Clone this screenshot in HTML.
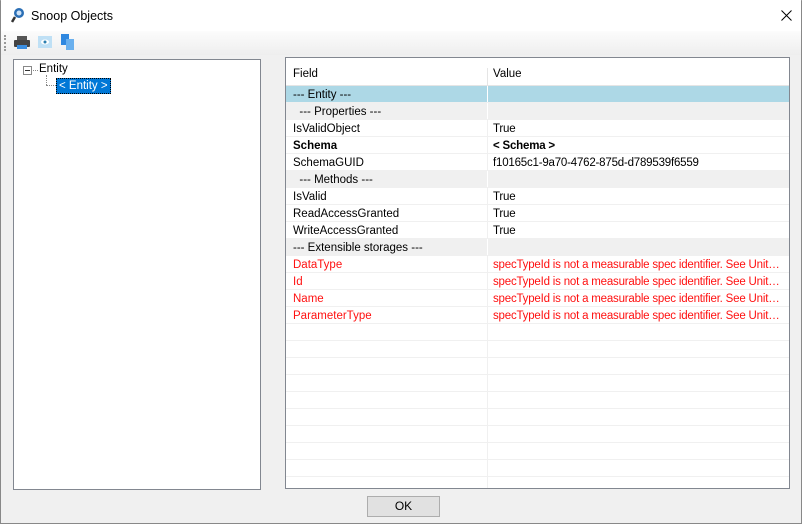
<!DOCTYPE html>
<html><head><meta charset="utf-8">
<style>
*{margin:0;padding:0;box-sizing:border-box}
body{width:802px;height:524px;overflow:hidden;background:#f0f0f0;font-family:"Liberation Sans",sans-serif;font-size:11.5px;color:#000;position:relative}
.win{position:absolute;left:0;top:0;width:802px;height:524px;border:1px solid #888;border-top:1px solid #aaa}
.title{position:absolute;left:1px;top:0;width:800px;height:31px;background:#fff}
.title span{position:absolute;left:30px;top:9px;font-size:12.5px}
.tool{position:absolute;left:1px;top:31px;width:800px;height:24px;background:linear-gradient(#fcfcfc,#eeeeee)}
.tree{position:absolute;left:13px;top:59px;width:248px;height:431px;background:#fff;border:1px solid #828790}
.grid{position:absolute;left:285px;top:57px;width:505px;height:432px;background:#fff;border:1px solid #828790;overflow:hidden}
.hdr{height:28px;position:relative;border-bottom:1px solid #e5e5e5}
.hdr div{position:absolute;top:10px}
.row{height:17px;position:relative;border-bottom:1px solid #f0f0f0;line-height:18px;white-space:nowrap}
.row .f{position:absolute;left:7px;width:194px;overflow:hidden}
.row .v{position:absolute;left:207px;width:290px;overflow:hidden;text-overflow:ellipsis;letter-spacing:-0.2px}
.vl{position:absolute;left:201px;top:0;bottom:0;width:1px;background:#f0f0f0}
.g{background:#f0f0f0}
.sel{background:#add8e6}
.red{color:#ff1010}
.b{font-weight:bold}
.ok{position:absolute;left:367px;top:496px;width:73px;height:21px;background:#e1e1e1;border:1px solid #adadad;text-align:center;line-height:19px;font-size:12px}
</style></head><body>
<div class="win"></div>
<div class="title">
<svg style="position:absolute;left:10px;top:7px" width="14" height="17" viewBox="0 0 14 17"><circle cx="8" cy="6" r="5" fill="#2b6fb5"/><circle cx="8" cy="6" r="2.5" fill="#cfe3f7"/><path d="M4 10 L1 15" stroke="#333" stroke-width="2.5"/></svg>
<span>Snoop Objects</span>
<svg style="position:absolute;left:780px;top:10px" width="11" height="11"><path d="M0.5 0.5L10.5 10.5M10.5 0.5L0.5 10.5" stroke="#000" stroke-width="1"/></svg></div>
<div class="tool">
<div style="position:absolute;left:3px;top:4px;width:2px;height:16px;border-left:2px dotted #999"></div>
<svg style="position:absolute;left:13px;top:5px" width="16" height="14"><rect x="3" y="0" width="10" height="4" fill="#555"/><rect x="0" y="4" width="16" height="7" rx="1" fill="#444"/><rect x="3" y="9" width="10" height="4" fill="#3b8ee0"/></svg>
<svg style="position:absolute;left:37px;top:5px" width="14" height="12"><rect width="14" height="12" fill="#bfe0f5"/><ellipse cx="7" cy="6" rx="4" ry="2.5" fill="#fff"/><circle cx="7" cy="6" r="1.5" fill="#2a7fb0"/></svg>
<svg style="position:absolute;left:60px;top:3px" width="14" height="16"><rect x="0" y="0" width="8" height="11" fill="#2f88e0"/><rect x="5" y="5" width="8" height="11" fill="#6ab0ee"/></svg>
</div>
<div class="tree">
<div style="position:absolute;left:9px;top:6px;width:9px;height:9px;border:1px solid #888;background:#fff"><div style="position:absolute;left:1px;top:3px;width:5px;height:1px;background:#333"></div></div>
<div style="position:absolute;left:19px;top:10px;width:5px;border-top:1px dotted #888"></div>
<div style="position:absolute;left:25px;top:3px">Entity</div>
<div style="position:absolute;left:32px;top:15px;height:10px;border-left:1px dotted #888"></div>
<div style="position:absolute;left:32px;top:25px;width:10px;border-top:1px dotted #888"></div>
<div style="position:absolute;left:42px;top:18px;height:16px;padding:0 2px;background:#0078d7;color:#fff;border:1px dotted #000;line-height:15px">&lt; Entity &gt;</div>
</div>
<div class="grid">
<div class="hdr"><div style="left:7px">Field</div><div style="left:207px">Value</div><div class="vl" style="background:#e5e5e5"></div></div>
<div class="row sel"><div class="f">--- Entity ---</div><div class="vl" style="background:#fff"></div></div>
<div class="row g"><div class="f">&nbsp;&nbsp;--- Properties ---</div><div class="vl" style="background:#fff"></div></div>
<div class="row"><div class="f">IsValidObject</div><div class="vl"></div><div class="v">True</div></div>
<div class="row b"><div class="f">Schema</div><div class="vl"></div><div class="v">&lt; Schema &gt;</div></div>
<div class="row"><div class="f">SchemaGUID</div><div class="vl"></div><div class="v">f10165c1-9a70-4762-875d-d789539f6559</div></div>
<div class="row g"><div class="f">&nbsp;&nbsp;--- Methods ---</div><div class="vl" style="background:#fff"></div></div>
<div class="row"><div class="f">IsValid</div><div class="vl"></div><div class="v">True</div></div>
<div class="row"><div class="f">ReadAccessGranted</div><div class="vl"></div><div class="v">True</div></div>
<div class="row"><div class="f">WriteAccessGranted</div><div class="vl"></div><div class="v">True</div></div>
<div class="row g"><div class="f">--- Extensible storages ---</div><div class="vl" style="background:#fff"></div></div>
<div class="row red"><div class="f">DataType</div><div class="vl"></div><div class="v">specTypeId is not a measurable spec identifier. See UnitUti...</div></div>
<div class="row red"><div class="f">Id</div><div class="vl"></div><div class="v">specTypeId is not a measurable spec identifier. See UnitUti...</div></div>
<div class="row red"><div class="f">Name</div><div class="vl"></div><div class="v">specTypeId is not a measurable spec identifier. See UnitUti...</div></div>
<div class="row red"><div class="f">ParameterType</div><div class="vl"></div><div class="v">specTypeId is not a measurable spec identifier. See UnitUti...</div></div>
<div class="row"><div class="vl"></div></div><div class="row"><div class="vl"></div></div><div class="row"><div class="vl"></div></div><div class="row"><div class="vl"></div></div><div class="row"><div class="vl"></div></div><div class="row"><div class="vl"></div></div><div class="row"><div class="vl"></div></div><div class="row"><div class="vl"></div></div><div class="row"><div class="vl"></div></div><div class="row"><div class="vl"></div></div><div class="row"><div class="vl"></div></div>
</div>
<div class="ok">OK</div>
</body></html>
